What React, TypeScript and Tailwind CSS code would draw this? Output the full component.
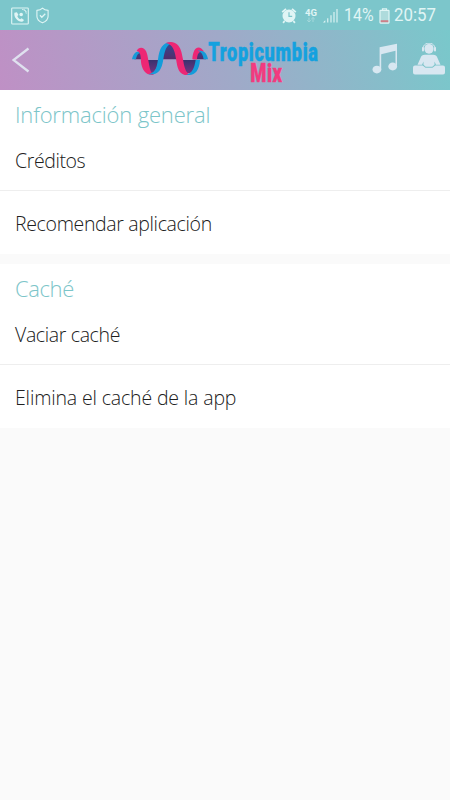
import { clsx } from "clsx";

const sections = [
  {
    title: "Información general",
    titleClass: "tracking-[-0.17px]",
    items: [
      { label: "Créditos", className: "tracking-[-0.4px]" },
      { label: "Recomendar aplicación", className: "tracking-[-0.34px]" },
    ],
  },
  {
    title: "Caché",
    titleClass: "tracking-[-0.4px]",
    items: [
      { label: "Vaciar caché", className: "tracking-[-0.36px]" },
      { label: "Elimina el caché de la app", className: "tracking-[-0.15px]" },
    ],
  },
];

function StatusBar() {
  return (
    <div className="flex h-[30px] items-center bg-[#7cc6cb] pt-px pl-[11px] pr-[11px] font-normal text-[#e0f5f5]">
      <svg width="18" height="18" viewBox="0 0 18 18" fill="none" stroke="currentColor">
        <rect x="0.7" y="1" width="16.6" height="16" rx="0.8" strokeWidth="1.1" />
        <path d="M3.4 5.7c-1 4.7 4 9.8 8.5 8.8l1.1-1.4-2.4-1.9-1.4 1c-1.4-.6-2.5-1.900-2.900-3.300l1.200-1-1.600-2.700z" fill="currentColor" stroke="none" />
        <circle cx="10.2" cy="7.5" r="1.8" fill="currentColor" stroke="none" />
        <path d="M11 2.4c2.6.3 4 1.7 4.3 4.3M13 2.2l2.5 2.5" strokeWidth="0.8" />
      </svg>
      <svg className="ml-[7px]" width="13" height="17" viewBox="0 0 13 17" fill="none" stroke="currentColor">
        <path d="M6.5 1.2C5.1 2.6 3 3.3.9 3.4v5.8c0 3 2.4 5.3 5.6 6.6 3.2-1.3 5.6-3.6 5.6-6.6V3.4C10 3.3 7.9 2.6 6.5 1.2z" strokeWidth="1.1" />
        <path d="M4 8.3l1.8 1.9 3.5-3.5" strokeWidth="1.3" />
      </svg>

      <svg className="ml-auto" width="16" height="17" viewBox="0 0 16 17" fill="currentColor">
        <circle cx="8" cy="9" r="6.5" />
        <path d="M1.2 5.2 5 1.8M11 1.8l3.8 3.4M3.6 14l-1.5 1.8M12.4 14l1.5 1.8" stroke="currentColor" strokeWidth="1.8" />
        <path d="M8 5.3v4h3.2" fill="none" stroke="#7cc6cb" strokeWidth="1.2" />
      </svg>
      <div className="ml-[6px] mr-px flex w-4 flex-col items-center">
        <span className="font-['Roboto',sans-serif] text-[9.5px] leading-[9px] font-bold">4G</span>
        <svg width="10" height="6" viewBox="0 0 10 6" fill="none" stroke="currentColor" opacity="0.4">
          <path d="M3 .5v4.5M1.2 3.3 3 5l1.8-1.7M7 5V.5M5.2 2.2 7 .5l1.8 1.7" />
        </svg>
      </div>
      <svg className="ml-[2px] mr-[2px]" width="17" height="16" viewBox="0 0 17 16" fill="currentColor">
        <path d="M1 14.5h2.3v-2.2z" />
        <path d="M5 10.3h1.4v4.2H5zM8.3 7.2h1.4v7.3H8.3zM11.3 4h1.4v10.5h-1.4zM14.3 1h1.4v13.5h-1.4z" opacity="0.8" />
      </svg>
      <span className="ml-[3px] w-[32px] whitespace-nowrap font-['Roboto',sans-serif] text-[18.5px] leading-none">
        <span className="inline-block origin-left scale-x-[0.86]">14%</span>
      </span>
      <svg className="ml-[3px]" width="11" height="16" viewBox="0 0 11 16" fill="none" stroke="currentColor">
        <path d="M3.5 2V.8h4V2" strokeWidth="1.2" />
        <rect x="1" y="2.3" width="9" height="12.8" rx="0.5" fill="#aedbdc" strokeWidth="1.2" />
        <path d="M1.7 13.2h7.6" stroke="#cc8189" strokeWidth="2" />
      </svg>
      <span className="ml-[4px] w-[45px] whitespace-nowrap font-['Roboto',sans-serif] text-[18.5px] leading-none">
        <span className="inline-block origin-left scale-x-[0.91]">20:57</span>
      </span>
    </div>
  );
}

function Logo() {
  return (
    <svg className="ml-[83px] shrink-0 overflow-visible" width="200" height="60" viewBox="0 0 600 180">
      <defs>
        <linearGradient id="hump" x1="0" y1="0" x2="0" y2="1">
          <stop offset="0" stopColor="#34478e" />
          <stop offset="1" stopColor="#542c6b" />
        </linearGradient>
        <linearGradient id="dip" x1="0" y1="0" x2="0" y2="1">
          <stop offset="0" stopColor="#38336f" />
          <stop offset="1" stopColor="#743581" />
        </linearGradient>
      </defs>
      {/* filled waves */}
      <path d="M28 88C31 71 39 64 47 66C57 68 64 77 66 88Z" fill="url(#hump)" />
      <path d="M57 90H102C98 112 88 130 78 130C67 130 60 112 57 90Z" fill="url(#dip)" />
      <path d="M108 88C112 58 121 42 134 42C149 42 157 62 164 88Z" fill="url(#hump)" />
      <path d="M168 90H216C212 114 203 130 191 130C179 130 173 112 168 90Z" fill="url(#dip)" />
      <path d="M205 88C207 77 214 67 224 66C234 65 240 74 243 88Z" fill="url(#hump)" />
      {/* ribbons */}
      <path d="M21 88C24 73 32 62 46 65L49 69C39 68 35 77 33 88Z" fill="#159bd8" />
      <path d="M35 63C41 50 57 50 64 65C73 88 70 127 87 134C64 138 54 123 49 103C46 85 50 66 35 63Z" fill="#ed2774" />
      <path d="M70 133C98 137 110 122 115 88C119 59 126 43 143 38C115 34 104 51 99 88C95 116 91 128 70 133Z" fill="#149cda" />
      <path d="M122 39C147 30 162 43 168 62C177 91 176 128 196 134C171 139 159 126 155 98C150 65 145 42 122 39Z" fill="#ed2774" />
      <path d="M184 134C209 139 222 124 225 90H212C208 114 202 130 184 134Z" fill="#149cda" />
      <path d="M202 88C204 55 217 47 230 56L238 65C222 63 217 71 216 88Z" fill="#ed2774" />
      <path d="M218 62C238 60 247 73 249 88H236C234 76 231 66 218 62Z" fill="#159bd8" />
      {/* name */}
      <g className="font-['Roboto',sans-serif]" fontWeight="900" strokeWidth="1.5">
        <text x="250" y="94" fontSize="78" letterSpacing="3" textLength="331" lengthAdjust="spacingAndGlyphs" fill="#14a1df" stroke="#14a1df">
          Tropicumbia
        </text>
        <text x="376" y="156" fontSize="80" letterSpacing="2" textLength="96" lengthAdjust="spacingAndGlyphs" fill="#f23b7f" stroke="#f23b7f">
          Mix
        </text>
      </g>
    </svg>
  );
}

function Header() {
  return (
    <header className="flex h-[60px] items-center bg-linear-[75deg,#bf90c5_0%,#a0a9c8_50%,#79c8cb_100%]">
      <button aria-label="Atrás" className="ml-3 w-[30px]">
        <svg width="18" height="26" viewBox="0 0 18 26" fill="none" stroke="#dfe1ef" strokeWidth="2.3">
          <path d="M16.5 1.5 1.5 13l15 11.5" />
        </svg>
      </button>
      <Logo />
      <svg className="ml-[47px] shrink-0" width="26" height="34" viewBox="0 0 26 34" fill="#d8e7f1">
        <path d="M7.6 4.2 25 .8v23h-1.5V7.8L9.2 11.2v15.6H7.6z" />
        <ellipse cx="4.9" cy="26.6" rx="4.4" ry="3.9" />
        <ellipse cx="20.7" cy="23.5" rx="4.4" ry="3.9" />
      </svg>
      <svg className="ml-[14px] shrink-0" width="34" height="34" viewBox="0 0 34 34" fill="#d8e7f1">
        <ellipse cx="17" cy="5.8" rx="4.6" ry="4.9" />
        <path d="M10.8 6.5C10.5-2 23.5-2 23.2 6.5" fill="none" stroke="#d8e7f1" strokeWidth="1" />
        <rect x="10" y="4" width="2" height="4.6" rx="1" />
        <rect x="22" y="4" width="2" height="4.6" rx="1" />
        <path d="M13 11.7h8c2.600 0 3.700 1.200 4.500 3.200l3 6.900h-4.500l-1.500-3.200v3.200l-2.200 2h-6.600l-2.200-2v-3.200L10 21.800H5.500l3-6.900c.8-2 1.900-3.200 4.500-3.200z" />
        <path d="M3 22.6h7.600l2.900 2.200h7l2.900-2.200H31a2 2 0 0 1 2 2v5a2 2 0 0 1-2 2H3a2 2 0 0 1-2-2v-5a2 2 0 0 1 2-2z" />
      </svg>
    </header>
  );
}

export default function App() {
  return (
    <div className="h-[800px] w-[450px] overflow-hidden bg-[#fafafa] font-['Open_Sans','Noto_Sans',sans-serif] font-light">
      <StatusBar />
      <Header />
      <main className="flex flex-col gap-[10px]">
        {sections.map((section) => (
          <section key={section.title} className="h-[164px] bg-white">
            <h2 className={clsx("h-[38px] px-[15px] pt-[8px] text-[22px] leading-8 font-light text-[#7cc5c9]", section.titleClass)}>
              {section.title}
            </h2>
            {section.items.map((item, i) => (
              <div
                key={item.label}
                className={clsx(
                  "flex h-[63px] items-center px-[15px] text-[19.5px] text-[#202020]",
                  i === 0 ? "border-b border-[#eeeeee] pt-[4px]" : "pt-[2px]",
                )}
              >
                <span className={item.className}>{item.label}</span>
              </div>
            ))}
          </section>
        ))}
      </main>
    </div>
  );
}
